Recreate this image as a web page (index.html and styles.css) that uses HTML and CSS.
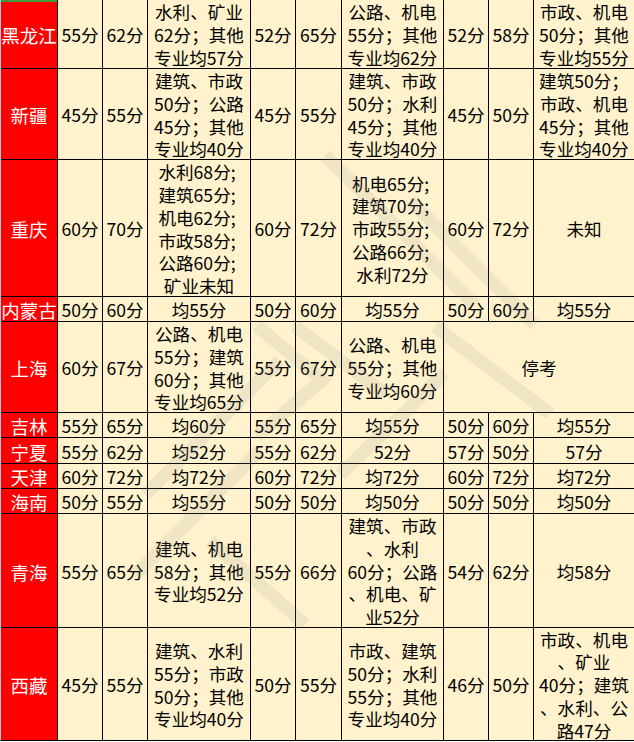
FILE: index.html
```html
<!DOCTYPE html>
<html lang="zh-CN">
<head>
<meta charset="utf-8">
<title>分数线</title>
<link rel="stylesheet" href="styles.css">
</head>
<body>
<div class="sheet">
  <div class="grid">
    <div class="c p top">黑龙江</div><div class="c">55分</div><div class="c">62分</div>
    <div class="c"><span>水利、矿业<br>62分；其他<br>专业均57分</span></div>
    <div class="c">52分</div><div class="c">65分</div>
    <div class="c"><span>公路、机电<br>55分；其他<br>专业均62分</span></div>
    <div class="c">52分</div><div class="c">58分</div>
    <div class="c"><span>市政、机电<br>50分；其他<br>专业均55分</span></div>

    <div class="c p">新疆</div><div class="c">45分</div><div class="c">55分</div>
    <div class="c"><span>建筑、市政<br>50分；公路<br>45分；其他<br>专业均40分</span></div>
    <div class="c">45分</div><div class="c">55分</div>
    <div class="c"><span>建筑、市政<br>50分；水利<br>45分；其他<br>专业均40分</span></div>
    <div class="c">45分</div><div class="c">50分</div>
    <div class="c"><span>建筑50分；<br>市政、机电<br>45分；其他<br>专业均40分</span></div>

    <div class="c p">重庆</div><div class="c">60分</div><div class="c">70分</div>
    <div class="c"><span>水利68分;&nbsp;<br>建筑65分;&nbsp;<br>机电62分;&nbsp;<br>市政58分;&nbsp;<br>公路60分;&nbsp;<br>矿业未知</span></div>
    <div class="c">60分</div><div class="c">72分</div>
    <div class="c"><span>机电65分;&nbsp;<br>建筑70分;&nbsp;<br>市政55分;&nbsp;<br>公路66分;&nbsp;<br>水利72分</span></div>
    <div class="c">60分</div><div class="c">72分</div>
    <div class="c">未知</div>

    <div class="c p">内蒙古</div><div class="c">50分</div><div class="c">60分</div>
    <div class="c">均55分</div><div class="c">50分</div><div class="c">60分</div>
    <div class="c">均55分</div><div class="c">50分</div><div class="c">60分</div>
    <div class="c">均55分</div>

    <div class="c p">上海</div><div class="c">60分</div><div class="c">67分</div>
    <div class="c"><span>公路、机电<br>55分；建筑<br>60分；其他<br>专业均65分</span></div>
    <div class="c">55分</div><div class="c">67分</div>
    <div class="c"><span>公路、机电<br>55分；其他<br>专业均60分</span></div>
    <div class="c span3">停考</div>

    <div class="c p">吉林</div><div class="c">55分</div><div class="c">65分</div>
    <div class="c">均60分</div><div class="c">55分</div><div class="c">65分</div>
    <div class="c">均55分</div><div class="c">50分</div><div class="c">60分</div>
    <div class="c">均55分</div>

    <div class="c p">宁夏</div><div class="c">55分</div><div class="c">62分</div>
    <div class="c">均52分</div><div class="c">55分</div><div class="c">62分</div>
    <div class="c">52分</div><div class="c">57分</div><div class="c">50分</div>
    <div class="c">57分</div>

    <div class="c p">天津</div><div class="c">60分</div><div class="c">72分</div>
    <div class="c">均72分</div><div class="c">60分</div><div class="c">72分</div>
    <div class="c">均72分</div><div class="c">60分</div><div class="c">72分</div>
    <div class="c">均72分</div>

    <div class="c p">海南</div><div class="c">50分</div><div class="c">55分</div>
    <div class="c">均55分</div><div class="c">50分</div><div class="c">50分</div>
    <div class="c">均50分</div><div class="c">50分</div><div class="c">50分</div>
    <div class="c">均50分</div>

    <div class="c p">青海</div><div class="c">55分</div><div class="c">65分</div>
    <div class="c"><span>建筑、机电<br>58分；其他<br>专业均52分</span></div>
    <div class="c">55分</div><div class="c">66分</div>
    <div class="c"><span>建筑、市政<br>、水利<br>60分；公路<br>、机电、矿<br>业52分</span></div>
    <div class="c">54分</div><div class="c">62分</div>
    <div class="c">均58分</div>

    <div class="c p">西藏</div><div class="c">45分</div><div class="c">55分</div>
    <div class="c"><span>建筑、水利<br>55分；市政<br>50分；其他<br>专业均40分</span></div>
    <div class="c">50分</div><div class="c">55分</div>
    <div class="c"><span>市政、建筑<br>50分；水利<br>55分；其他<br>专业均40分</span></div>
    <div class="c">46分</div><div class="c">50分</div>
    <div class="c"><span>市政、机电<br>、矿业<br>40分；建筑<br>、水利、公<br>路47分</span></div>
  </div>
  <svg class="watermark" width="634" height="742" viewBox="0 0 634 742" aria-hidden="true">
    <g fill="none" stroke="#8a8a8a" stroke-width="13" stroke-linecap="square" opacity="0.13">
      <path d="M140 570 L255 455"/>
      <path d="M150 490 L275 365"/>
      <path d="M262 330 L322 380 L262 432"/>
      <path d="M330 160 L470 300"/>
      <path d="M300 330 L380 390"/>
      <path d="M415 205 L530 320"/>
      <path d="M440 330 L545 410"/>
      <path d="M345 470 L440 378"/>
      <path d="M215 545 L300 620"/>
    </g>
  </svg>
</div>
</body>
</html>
```
FILE: styles.css
```css
html, body {
  margin: 0;
  padding: 0;
  background: #ffffff;
}

.sheet {
  position: relative;
  width: 634px;
  height: 742px;
  overflow: hidden;
}

.grid {
  display: grid;
  grid-template-columns: 56px 44px 44px 102px 44px 45px 101px 44px 44px 100px;
  grid-template-rows: 68px 90px 136px 24px 90px 24px 25px 24px 24px 113px 112px;
  gap: 1px;
  background: #000000;
  border-left: 1px solid #b7cbe0;
  border-bottom: 1px solid #000000;
  width: 633px;
  font-family: "Noto Sans CJK SC", "Noto Sans", sans-serif;
  font-size: 17.6px;
  line-height: 22.7px;
  color: #000000;
}

.c {
  background: #fff2cc;
  display: flex;
  align-items: center;
  justify-content: center;
  text-align: center;
  white-space: nowrap;
  padding-top: 3px;
  box-sizing: border-box;
  min-height: 0;
}

.c span {
  display: block;
}

.p {
  background: #ff0000;
  color: #ffffff;
  font-size: 18.5px;
}

.top {
  box-shadow: inset 0 2px 0 #3f9b3f;
}

.span3 {
  grid-column: span 3;
}

.watermark {
  position: absolute;
  left: 0;
  top: 0;
  pointer-events: none;
}
```
